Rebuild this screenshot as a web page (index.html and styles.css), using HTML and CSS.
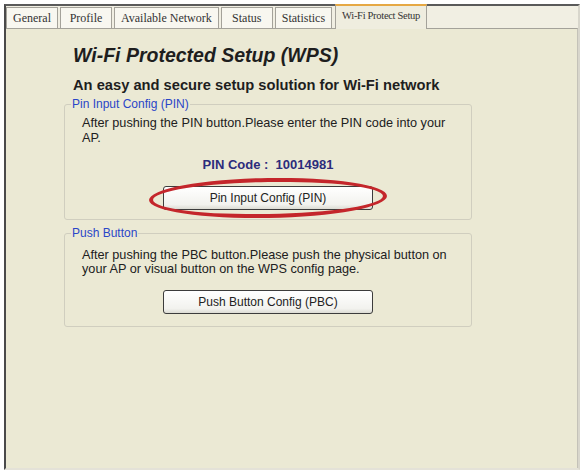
FILE: index.html
```html
<!DOCTYPE html>
<html lang="en">
<head>
  <meta charset="UTF-8">
  <title>Wi-Fi Protect Setup</title>
  <link rel="stylesheet" href="styles.css">
</head>
<body>

<div class="window">
  <div class="tabs">
    <div class="tab">General</div>
    <div class="tab">Profile</div>
    <div class="tab">Available Network</div>
    <div class="tab">Status</div>
    <div class="tab">Statistics</div>
    <div class="tab active">Wi-Fi Protect Setup</div>
  </div>

  <div class="panel">
    <h1 class="title">Wi-Fi Protected Setup (WPS)</h1>
    <p class="subtitle">An easy and secure setup solution for Wi-Fi network</p>

    <fieldset class="group">
      <legend>Pin Input Config (PIN)</legend>
      <p class="desc">After pushing the PIN button.Please enter the PIN code into your<br>AP.</p>
      <div class="pin">PIN Code :&nbsp; 10014981</div>
      <div class="btn-row">
        <div class="circled">
          <button class="btn">Pin Input Config (PIN)</button>
          <span class="ring"></span>
        </div>
      </div>
    </fieldset>

    <fieldset class="group push">
      <legend>Push Button</legend>
      <p class="desc">After pushing the PBC button.Please push the physical button on<br>your AP or visual button on the WPS config page.</p>
      <div class="btn-row">
        <button class="btn">Push Button Config (PBC)</button>
      </div>
    </fieldset>
  </div>
</div>

</body>
</html>
```

FILE: styles.css
```css
body {
  margin: 0;
  background: #ffffff;
  font-family: 'Liberation Sans', Arial, sans-serif;
}
.window {
  margin: 4px 4px 4px 4px;
  height: 466px;
  box-sizing: border-box;
  border-top: 2px solid #5a5a5a;
  border-left: 2px solid #4a4a4a;
  border-right: 2px solid #d8d6cc;
  border-bottom: 2px solid #e4e2d8;
  background: #f1efe3;
  display: flex;
  flex-direction: column;
}
.tabs {
  display: flex;
  align-items: flex-end;
  gap: 2px;
  height: 22px;
  padding-left: 0;
}
.tab {
  height: 20px;
  min-width: 38px;
  padding: 0 6px;
  border: 1px solid #a4a29a;
  border-bottom: none;
  background: #f8f7f0;
  font-family: 'Liberation Serif', 'Times New Roman', serif;
  font-size: 12px;
  line-height: 20px;
  text-align: center;
  color: #333;
}
.tab.active {
  height: 23px;
  padding: 0 6px;
  margin-left: 1px;
  margin-bottom: -1px;
  border-top: 2px solid #e6a844;
  background: #efeddf;
  font-size: 10.5px;
  letter-spacing: -0.3px;
  position: relative;
  z-index: 1;
}
.panel {
  flex: 1;
  border-top: 1px solid #a4a29a;
  border-right: 1px solid #c4c2b8;
  background: #ebe9d4;
  padding: 15px 0 0 58px;
}
.title {
  margin: 0 0 0 9px;
  font-size: 19.5px;
  font-weight: bold;
  font-style: italic;
  color: #1e1e1e;
}
.subtitle {
  margin: 10px 0 4px 9px;
  font-size: 14.7px;
  font-weight: bold;
  color: #1e1e1e;
}
.group {
  width: 386px;
  margin: 0 0 6px 0;
  padding: 4px 10px 9px 10px;
  border: 1px solid #d0cebf;
  border-radius: 3px;
}
.group.push {
  padding-bottom: 12px;
}
.group legend {
  padding: 0 1px;
  margin-left: -4px;
  font-size: 12px;
  color: #2a46c8;
}
.desc {
  margin: 1px 0 0 7px;
  font-size: 12.7px;
  line-height: 15px;
  color: #202020;
}
.push .desc {
  margin-top: 4px;
  line-height: 14px;
}
.pin {
  margin-top: 11px;
  text-align: center;
  font-size: 13px;
  font-weight: bold;
  color: #2c2c7c;
}
.btn-row {
  display: flex;
  justify-content: center;
  margin-top: 14px;
}
.circled {
  position: relative;
}
.btn {
  width: 210px;
  height: 24px;
  border: 1px solid #3c3c3c;
  border-radius: 3px;
  background: linear-gradient(#ffffff, #f2f2ee 80%, #dcdcd4);
  font-family: 'Liberation Sans', Arial, sans-serif;
  font-size: 12px;
  color: #222;
}
/* red marker ellipse drawn over the PIN button */
.ring {
  position: absolute;
  left: -14px;
  top: -8px;
  right: -14px;
  bottom: -8px;
  border: 4px solid #c4262b;
  border-radius: 50%;
  transform: rotate(-1deg);
  pointer-events: none;
}
```
